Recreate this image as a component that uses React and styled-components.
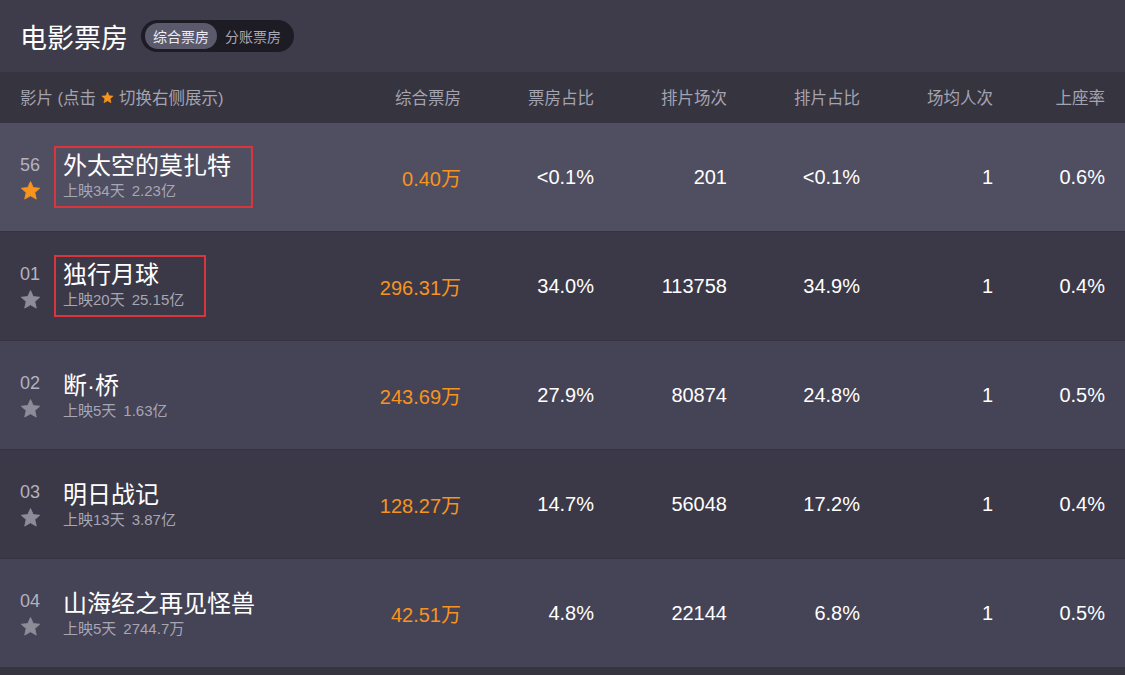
import styled, { createGlobalStyle } from "styled-components";

const GlobalStyle = createGlobalStyle`
  html, body {
    margin: 0;
    padding: 0;
    background: #36343f;
  }
  body {
    font-family: "Liberation Sans", "Noto Sans CJK SC", sans-serif;
  }
`;

const movies = [
  { rank: "56", name: "外太空的莫扎特", days: "上映34天", total: "2.23亿", box: "0.40万", boxRate: "<0.1%", shows: "201", showRate: "<0.1%", avg: "1", seat: "0.6%", fav: true, marked: true },
  { rank: "01", name: "独行月球", days: "上映20天", total: "25.15亿", box: "296.31万", boxRate: "34.0%", shows: "113758", showRate: "34.9%", avg: "1", seat: "0.4%", marked: true },
  { rank: "02", name: "断·桥", days: "上映5天", total: "1.63亿", box: "243.69万", boxRate: "27.9%", shows: "80874", showRate: "24.8%", avg: "1", seat: "0.5%" },
  { rank: "03", name: "明日战记", days: "上映13天", total: "3.87亿", box: "128.27万", boxRate: "14.7%", shows: "56048", showRate: "17.2%", avg: "1", seat: "0.4%" },
  { rank: "04", name: "山海经之再见怪兽", days: "上映5天", total: "2744.7万", box: "42.51万", boxRate: "4.8%", shows: "22144", showRate: "6.8%", avg: "1", seat: "0.5%" },
];

function Star({ size = 20, color = "#8d8c99" }) {
  return (
    <svg width={size} height={size} viewBox="0 0 24 24">
      <path
        d="M12 1.8l3.1 6.9 7.4.7-5.6 5 1.7 7.4L12 18l-6.6 3.8 1.7-7.4-5.6-5 7.4-.7z"
        fill={color}
        stroke={color}
        strokeWidth="1"
        strokeLinejoin="round"
      />
    </svg>
  );
}

export default function App() {
  return (
    <Page>
      <GlobalStyle />
      <TitleBar>
        <Title>电影票房</Title>
        <Toggle>
          <ToggleItem active>综合票房</ToggleItem>
          <ToggleItem>分账票房</ToggleItem>
        </Toggle>
      </TitleBar>
      <HeadRow>
        <HeadFilm>
          影片 (点击 <Star size={13} color="#f7941d" /> 切换右侧展示)
        </HeadFilm>
        <HeadCell>综合票房</HeadCell>
        <HeadCell>票房占比</HeadCell>
        <HeadCell>排片场次</HeadCell>
        <HeadCell>排片占比</HeadCell>
        <HeadCell>场均人次</HeadCell>
        <HeadCell>上座率</HeadCell>
      </HeadRow>
      {movies.map((m, i) => (
        <Row key={m.rank} tone={m.fav ? "active" : i % 2 ? "dark" : "light"}>
          <Film>
            <RankCol>
              <Rank>{m.rank}</Rank>
              <Star size={21} color={m.fav ? "#f7941d" : "#8d8c99"} />
            </RankCol>
            <NameBox marked={m.marked}>
              <Name>{m.name}</Name>
              <Sub>
                {m.days}
                <span>{m.total}</span>
              </Sub>
            </NameBox>
          </Film>
          <Value accent>{m.box}</Value>
          <Value>{m.boxRate}</Value>
          <Value>{m.shows}</Value>
          <Value>{m.showRate}</Value>
          <Value>{m.avg}</Value>
          <Value>{m.seat}</Value>
        </Row>
      ))}
    </Page>
  );
}

const Page = styled.div`
  width: 1125px;
  min-height: 675px;
  background: #36343f;
  overflow: hidden;
`;

const TitleBar = styled.div`
  height: 72px;
  display: flex;
  align-items: center;
  gap: 13px;
  padding: 0 20px;
  background: #3e3c4b;
`;

const Title = styled.h1`
  margin: 0;
  font-size: 27px;
  font-weight: 400;
  color: #ffffff;
`;

const Toggle = styled.div`
  display: flex;
  align-items: center;
  height: 32px;
  padding: 0 5px 0 4px;
  border-radius: 16px;
  background: #1d1c24;
`;

const ToggleItem = styled.span`
  display: flex;
  align-items: center;
  height: 26px;
  padding: 0 8px;
  border-radius: 13px;
  font-size: 14px;
  color: ${(p) => (p.active ? "#ececf2" : "#a9a8b4")};
  background: ${(p) => (p.active ? "#5b596c" : "transparent")};
`;

const grid = `
  display: grid;
  grid-template-columns: 308px repeat(5, 133px) 1fr;
  align-items: center;
  padding: 0 20px;
`;

const HeadRow = styled.div`
  ${grid}
  height: 50px;
  background: #36343f;
`;

const HeadFilm = styled.div`
  display: flex;
  align-items: center;
  gap: 5px;
  font-size: 16.5px;
  color: #a4a3b0;
`;

const HeadCell = styled.div`
  text-align: right;
  font-size: 16.5px;
  color: #a4a3b0;
`;

const rowColors = {
  active: "#504e61",
  light: "#454356",
  dark: "#3b3948",
};

const Row = styled.div`
  ${grid}
  height: 108px;
  margin-top: 1px;
  background: ${(p) => rowColors[p.tone]};
`;

const Film = styled.div`
  display: flex;
  align-items: center;
`;

const RankCol = styled.div`
  width: 43px;
  display: flex;
  flex-direction: column;
  align-items: flex-start;
  gap: 6px;
  padding-top: 3px;
`;

const Rank = styled.span`
  font-size: 18px;
  line-height: 18px;
  color: #b3b2bf;
`;

const NameBox = styled.div`
  display: flex;
  flex-direction: column;
  margin-left: ${(p) => (p.marked ? "-9px" : "0")};
  padding: ${(p) => (p.marked ? "3px 20px 6px 7px" : "0")};
  border: ${(p) => (p.marked ? "2px solid #d8363c" : "none")};
`;

const Name = styled.div`
  font-size: 24px;
  line-height: 30px;
  color: #ffffff;
`;

const Sub = styled.div`
  display: flex;
  gap: 7px;
  font-size: 15px;
  line-height: 19px;
  color: #a7a6b3;
`;

const Value = styled.div`
  text-align: right;
  font-size: 20px;
  color: ${(p) => (p.accent ? "#f7931e" : "#ffffff")};
`;
